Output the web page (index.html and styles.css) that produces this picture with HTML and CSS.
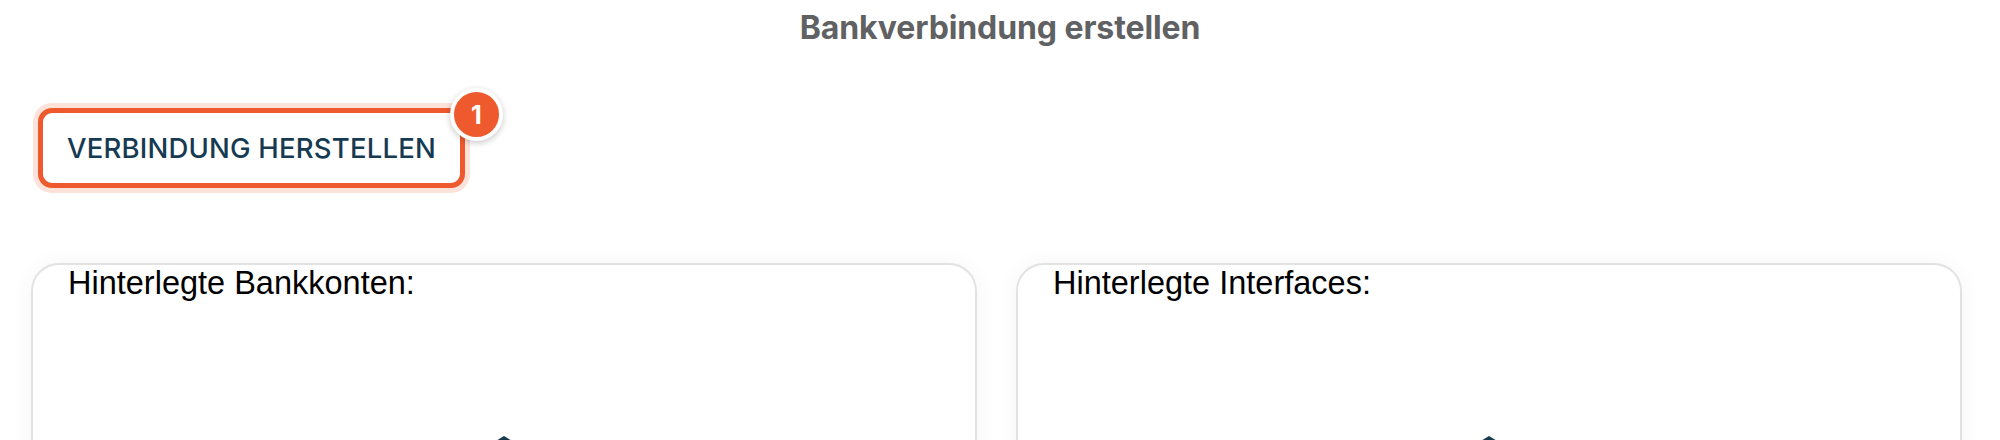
FILE: index.html
```html
<!DOCTYPE html>
<html lang="de">
<head>
<meta charset="utf-8">
<title>Bankverbindung erstellen</title>
<link rel="stylesheet" href="styles.css">
</head>
<body>
<h1 class="page-title">Bankverbindung erstellen</h1>
<div class="toolbar">
  <div class="btn-wrap">
    <button class="connect-btn" type="button">VERBINDUNG HERSTELLEN</button>
    <span class="badge">1</span>
  </div>
</div>
<div class="cards">
  <section class="card">
    <h2 class="card-title">Hinterlegte Bankkonten:</h2>
    <div class="card-body">
      <svg class="bank-icon" viewBox="0 0 60 60" width="60" height="60" aria-hidden="true">
        <path d="M30 2 L56 18 L4 18 Z" fill="#173a4d"/>
        <rect x="9" y="22" width="6" height="24" fill="#173a4d"/>
        <rect x="22" y="22" width="6" height="24" fill="#173a4d"/>
        <rect x="33" y="22" width="6" height="24" fill="#173a4d"/>
        <rect x="45" y="22" width="6" height="24" fill="#173a4d"/>
        <rect x="4" y="50" width="52" height="6" fill="#173a4d"/>
      </svg>
    </div>
  </section>
  <section class="card">
    <h2 class="card-title">Hinterlegte Interfaces:</h2>
    <div class="card-body">
      <svg class="bank-icon" viewBox="0 0 60 60" width="60" height="60" aria-hidden="true">
        <path d="M30 2 L56 18 L4 18 Z" fill="#173a4d"/>
        <rect x="9" y="22" width="6" height="24" fill="#173a4d"/>
        <rect x="22" y="22" width="6" height="24" fill="#173a4d"/>
        <rect x="33" y="22" width="6" height="24" fill="#173a4d"/>
        <rect x="45" y="22" width="6" height="24" fill="#173a4d"/>
        <rect x="4" y="50" width="52" height="6" fill="#173a4d"/>
      </svg>
    </div>
  </section>
</div>
</body>
</html>
```
FILE: styles.css
```css
* { box-sizing: border-box; }

html, body {
  margin: 0;
  padding: 0;
  background: #ffffff;
  font-family: Inter, "Noto Sans", "Liberation Sans", sans-serif;
}

body {
  width: 2000px;
  height: 440px;
  overflow: hidden;
}

.page-title {
  margin: 0;
  padding-top: 10px;
  text-align: center;
  font-size: 32px;
  line-height: 36px;
  font-weight: 700;
  color: #5f6163;
  letter-spacing: -0.1px;
}

.toolbar {
  margin-top: 62px;
  padding-left: 38px;
  display: flex;
}

.btn-wrap {
  position: relative;
}

.connect-btn {
  display: flex;
  align-items: center;
  justify-content: center;
  width: 427px;
  height: 80px;
  padding: 0;
  background: #ffffff;
  border: 5px solid #ee5a2e;
  border-radius: 14px;
  box-shadow: 0 0 0 5px #fde2da;
  font-family: Inter, "Noto Sans", sans-serif;
  font-size: 27.5px;
  font-weight: 500;
  letter-spacing: 0.2px;
  color: #163a52;
}

.badge {
  position: absolute;
  top: -20px;
  right: -38px;
  width: 53px;
  height: 53px;
  border-radius: 50%;
  background: #ee5a2e;
  border: 4px solid #ffffff;
  box-shadow: 0 2px 6px rgba(0, 0, 0, 0.22);
  color: #ffffff;
  font-size: 25px;
  font-weight: 700;
  display: flex;
  align-items: center;
  justify-content: center;
}

.cards {
  margin-top: 75px;
  padding: 0 38px 0 31px;
  display: grid;
  grid-template-columns: 1fr 1fr;
  column-gap: 39px;
}

.card {
  height: 400px;
  background: #ffffff;
  border: 2px solid #e2e2e2;
  border-radius: 28px 28px 0 0;
  box-shadow: 0 0 22px rgba(0, 0, 0, 0.045);
  padding: 0 35px;
  display: flex;
  flex-direction: column;
}

.card-title {
  margin: 0;
  padding-top: 0;
  font-family: "Liberation Sans", Arial, sans-serif;
  font-size: 32.5px;
  line-height: 37px;
  font-weight: 400;
  color: #000000;
}

.card-body {
  display: flex;
  justify-content: center;
  padding-top: 132px;
}

.bank-icon {
  display: block;
}
```
